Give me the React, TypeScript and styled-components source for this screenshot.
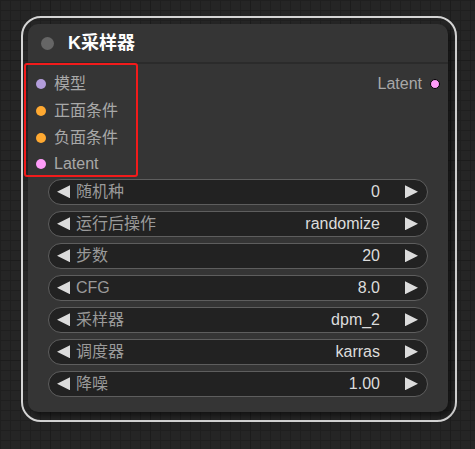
import React from 'react';
import styled, { createGlobalStyle } from 'styled-components';

const GlobalStyle = createGlobalStyle`
  html, body {
    margin: 0;
    padding: 0;
    background: #242424;
  }
  * { box-sizing: border-box; }
`;

const FONT = `"Liberation Sans", Arial, "Noto Sans CJK SC", sans-serif`;

const Canvas = styled.div`
  width: 475px;
  height: 449px;
  overflow: hidden;
  padding: 16px 0 0 21px;
  background-color: #252525;
  background-image:
    linear-gradient(to right, #1c1c1c 1px, transparent 1px),
    linear-gradient(to bottom, #1c1c1c 1px, transparent 1px),
    linear-gradient(to right, #1f1f1f 1px, transparent 1px),
    linear-gradient(to bottom, #1f1f1f 1px, transparent 1px);
  background-size: 100px 100px, 100px 100px, 10px 10px, 10px 10px;
  background-position: -50px -40px, -50px -40px, 0 0, 0 0;
  font-family: ${FONT};
`;

const Selection = styled.div`
  position: relative;
  width: 436px;
  height: 406px;
  padding: 6px 7px 8px 5px;
  border: 2px solid #d4d4d4;
  border-radius: 20px;
`;

const Node = styled.div`
  width: 420px;
  height: 388px;
  background: #353535;
  border-radius: 10px;
  box-shadow: 4px 4px 5px rgba(0, 0, 0, 0.45);
  display: flex;
  flex-direction: column;
`;

const TitleBar = styled.div`
  height: 40px;
  display: flex;
  align-items: center;
  gap: 14px;
  padding: 0 0 0 13px;
  border-bottom: 2px solid #2b2b2b;
`;

const TitleDot = styled.span`
  width: 13px;
  height: 13px;
  border-radius: 50%;
  background: #666;
`;

const TitleText = styled.span`
  color: #fff;
  font-size: 18px;
  font-weight: bold;
  line-height: 20px;
`;

const Slots = styled.div`
  display: flex;
  justify-content: space-between;
  padding: 7px 8px 0 8px;
`;

const SlotColumn = styled.div`
  display: flex;
  flex-direction: column;
`;

const SlotRow = styled.div<{ $out?: boolean }>`
  height: 26.67px;
  display: flex;
  align-items: center;
  gap: 8px;
  flex-direction: ${({ $out }) => ($out ? 'row-reverse' : 'row')};
  color: #a8a8a8;
  font-size: 16px;
  line-height: 18px;
`;

const SlotDot = styled.span<{ $color: string; $outlined?: boolean }>`
  width: 10px;
  height: 10px;
  border-radius: 50%;
  background: ${({ $color }) => $color};
  border: ${({ $outlined }) => ($outlined ? '1px solid #000' : 'none')};
  flex-shrink: 0;
`;

const Widgets = styled.div`
  display: flex;
  flex-direction: column;
  gap: 6px;
  padding: 1px 20px 0 20px;
`;

const Widget = styled.div`
  height: 26px;
  display: flex;
  align-items: center;
  padding: 0 9px 0 8px;
  background: #222;
  border: 1px solid #5e5e5e;
  border-radius: 13px;
  font-size: 16px;
  line-height: 18px;
`;

const Arrow = styled.span<{ $dir: 'left' | 'right' }>`
  width: 13px;
  height: 13px;
  background: #dcdcdc;
  flex-shrink: 0;
  clip-path: ${({ $dir }) =>
    $dir === 'left' ? 'polygon(0 50%, 100% 0, 100% 100%)' : 'polygon(0 0, 100% 50%, 0 100%)'};
`;

const WidgetLabel = styled.span`
  flex: 1;
  margin-left: 6px;
  color: #9a9a9a;
`;

const WidgetValue = styled.span`
  color: #dcdcdc;
  margin-right: 25px;
`;

const Highlight = styled.div`
  position: absolute;
  left: 1px;
  top: 45px;
  width: 114px;
  height: 114px;
  border: 2px solid #f21b1b;
  border-radius: 3px;
  pointer-events: none;
`;

const inputs = [
  { name: '模型', color: '#b39ddb' },
  { name: '正面条件', color: '#ffa931' },
  { name: '负面条件', color: '#ffa931' },
  { name: 'Latent', color: '#ff9cf9' },
];

const widgets = [
  { label: '随机种', value: '0' },
  { label: '运行后操作', value: 'randomize' },
  { label: '步数', value: '20' },
  { label: 'CFG', value: '8.0' },
  { label: '采样器', value: 'dpm_2' },
  { label: '调度器', value: 'karras' },
  { label: '降噪', value: '1.00' },
];

export default function App() {
  return (
    <>
      <GlobalStyle />
      <Canvas>
        <Selection>
          <Node>
            <TitleBar>
              <TitleDot />
              <TitleText>K采样器</TitleText>
            </TitleBar>
            <Slots>
              <SlotColumn>
                {inputs.map(s => (
                  <SlotRow key={s.name}>
                    <SlotDot $color={s.color} />
                    {s.name}
                  </SlotRow>
                ))}
              </SlotColumn>
              <SlotColumn>
                <SlotRow $out>
                  <SlotDot $color="#ff9cf9" $outlined />
                  Latent
                </SlotRow>
              </SlotColumn>
            </Slots>
            <Widgets>
              {widgets.map(w => (
                <Widget key={w.label}>
                  <Arrow $dir="left" />
                  <WidgetLabel>{w.label}</WidgetLabel>
                  <WidgetValue>{w.value}</WidgetValue>
                  <Arrow $dir="right" />
                </Widget>
              ))}
            </Widgets>
          </Node>
          <Highlight />
        </Selection>
      </Canvas>
    </>
  );
}
